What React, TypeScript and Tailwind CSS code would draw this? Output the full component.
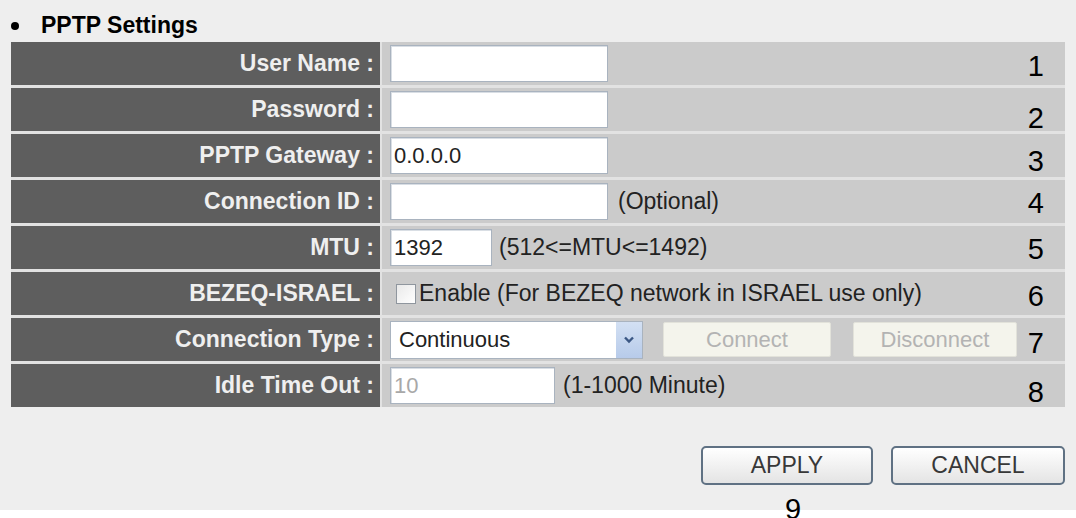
import React from 'react';

const font = { fontFamily: '"Liberation Sans", Arial, sans-serif' };

function TextBox({ value = '', width, muted = false }: { value?: string; width: string; muted?: boolean }) {
  return (
    <div
      className={`${width} h-[37px] bg-white border border-[#a9b3bf] shadow-[inset_1px_1px_0_#d9dee4] flex items-center pl-[3px] text-[22px] ${
        muted ? 'text-[#a8a8a8]' : 'text-[#222]'
      }`}
    >
      {value}
    </div>
  );
}

function Row({
  label,
  num,
  numClass,
  children,
}: {
  label: string;
  num: string;
  numClass: string;
  children: React.ReactNode;
}) {
  return (
    <div className="flex h-[43px]">
      <div className="w-[369px] bg-[#5e5e5e] flex items-center justify-end pr-[6px] text-[23px] font-bold text-[#efefef]">
        {label}
      </div>
      <div className="ml-[2px] flex-1 bg-[#cbcbcb] flex items-center pl-[8px] pr-[21px] text-[23px] text-[#222]">
        {children}
        <span className={`ml-auto text-[29px] leading-none text-black ${numClass}`}>{num}</span>
      </div>
    </div>
  );
}

export default function App() {
  return (
    <div className="w-[1076px] h-[518px] bg-white overflow-hidden" style={font}>
      <div className="h-[510px] bg-[#eeeeee] pl-[11px]">
        {/* Section title */}
        <div className="h-[42px] flex items-start pt-[14px] text-[23px] font-bold leading-none text-black">
          <span className="mt-[8px] w-[8px] h-[8px] rounded-full bg-black" />
          <span className="ml-[22px]">PPTP Settings</span>
        </div>

        {/* Settings table */}
        <div className="w-[1054px] flex flex-col gap-[3px] bg-[#e2e2e2]">
          <Row label="User Name :" num="1" numClass="translate-y-[3px]">
            <TextBox width="w-[218px]" />
          </Row>
          <Row label="Password :" num="2" numClass="translate-y-[9px]">
            <TextBox width="w-[218px]" />
          </Row>
          <Row label="PPTP Gateway :" num="3" numClass="translate-y-[6px]">
            <TextBox width="w-[218px]" value="0.0.0.0" />
          </Row>
          <Row label="Connection ID :" num="4" numClass="translate-y-[2px]">
            <TextBox width="w-[218px]" />
            <span className="ml-[10px]">(Optional)</span>
          </Row>
          <Row label="MTU :" num="5" numClass="translate-y-[2px]">
            <TextBox width="w-[102px]" value="1392" />
            <span className="ml-[7px]">(512&lt;=MTU&lt;=1492)</span>
          </Row>
          <Row label="BEZEQ-ISRAEL :" num="6" numClass="translate-y-[3px]">
            <span className="ml-[6px] w-[20px] h-[20px] border border-[#8f969e] bg-linear-to-br from-[#e9e9e9] to-white" />
            <span className="ml-[3px]">Enable (For BEZEQ network in ISRAEL use only)</span>
          </Row>
          <Row label="Connection Type :" num="7" numClass="translate-y-[4px]">
            <div className="w-[253px] h-[38px] bg-white border border-[#a9b3bf] flex items-stretch">
              <span className="flex-1 flex items-center pl-[8px] text-[22px] text-[#222]">Continuous</span>
              <span className="w-[26px] bg-linear-to-b from-[#d3e0f3] to-[#b7cbea] flex items-center justify-center">
                <svg width="12" height="9" viewBox="0 0 12 9">
                  <path d="M2 2.5 L6 6.5 L10 2.5" fill="none" stroke="#3b5784" strokeWidth="2.4" />
                </svg>
              </span>
            </div>
            <div className="ml-[20px] w-[168px] h-[35px] bg-[#f4f4ec] border border-[#e2e2da] rounded-[2px] flex items-center justify-center text-[22px] text-[#b3b3b3]">
              Connect
            </div>
            <div className="ml-[22px] w-[164px] h-[35px] bg-[#f4f4ec] border border-[#e2e2da] rounded-[2px] flex items-center justify-center text-[22px] text-[#b3b3b3]">
              Disconnect
            </div>
          </Row>
          <Row label="Idle Time Out :" num="8" numClass="translate-y-[7px]">
            <TextBox width="w-[165px]" value="10" muted />
            <span className="ml-[8px]">(1-1000 Minute)</span>
          </Row>
        </div>

        {/* Actions */}
        <div className="w-[1054px] mt-[39px] flex justify-end gap-[18px]">
          <div className="flex flex-col items-center">
            <button className="w-[172px] h-[39px] rounded-[5px] border-2 border-[#5f7183] bg-linear-to-b from-white to-[#e4e4e4] text-[23px] text-[#383838]">
              APPLY
            </button>
            <span className="mt-[10px] ml-[12px] text-[29px] leading-none text-black">9</span>
          </div>
          <button className="w-[174px] h-[39px] rounded-[5px] border-2 border-[#5f7183] bg-linear-to-b from-white to-[#e4e4e4] text-[23px] text-[#383838]">
            CANCEL
          </button>
        </div>
      </div>
    </div>
  );
}
